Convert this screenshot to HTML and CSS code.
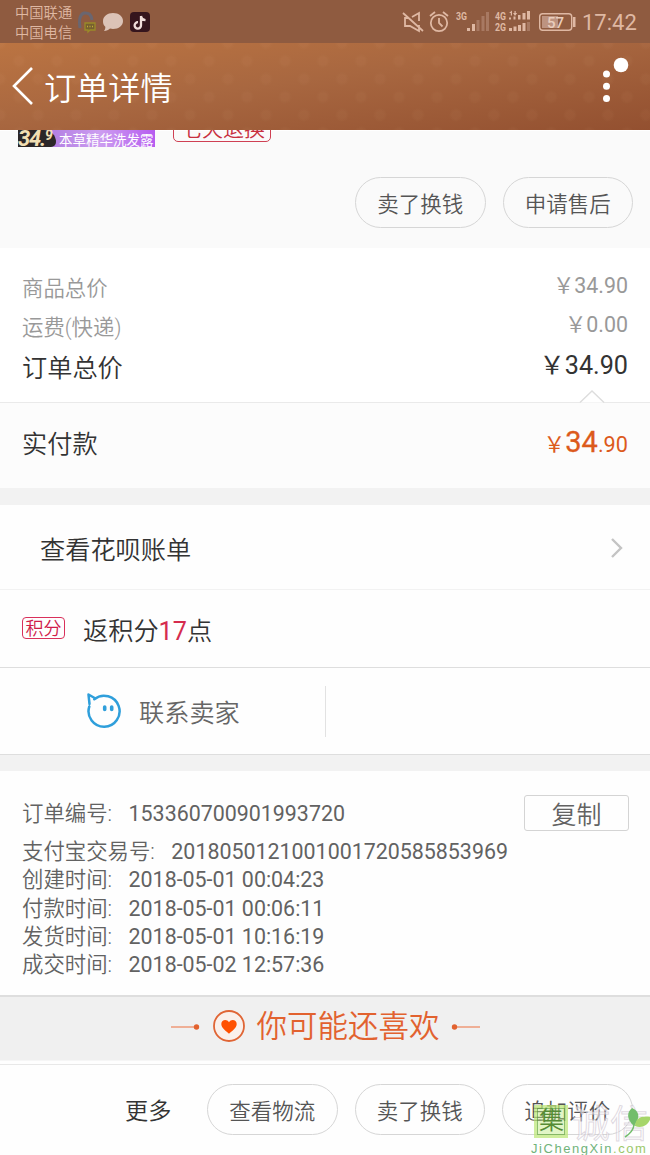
FILE: index.html
```html
<!DOCTYPE html>
<html lang="zh-CN">
<head>
<meta charset="utf-8">
<title>订单详情</title>
<link rel="stylesheet" href="styles.css">
</head>
<body>
<div class="screen">
  <div class="status">
    <div class="carriers"><span>中国联通</span><span>中国电信</span></div>
    <svg class="status-apps" width="78" height="43" viewBox="0 0 78 43">
      <path d="M4 28 Q2 15 8 13 Q15 12 16 20" fill="none" stroke="#6a6670" stroke-width="3"/>
      <path d="M9 23h10v7h-5l-2 2v-2H9z" fill="#77602f" stroke="#9b8a28" stroke-width="1.3"/>
      <path d="M11 26.5h1m1.5 0h1m1.5 0h1" stroke="#c1ab3a" stroke-width="1.5"/>
      <path d="M37 13c5.800 0 10 3.500 10 8s-4.200 8-10 8c-1 0-2-.1-3-.4-1.500 1.400-3.500 2.400-6 2.400 1-1.300 1.500-2.700 1.300-4.200C27.500 25.300 27 23.300 27 21c0-4.500 4.500-8 10-8z" fill="#dcc3b7"/>
      <rect x="54" y="12" width="20" height="20" rx="4" fill="#35151d"/>
      <path d="M65 16v9.300a3.200 3.200 0 1 1-3-3.100M65 16c.3 2.400 2 3.900 4.500 4.100" fill="none" stroke="#f0dedb" stroke-width="2.300"/>
    </svg>
    <span class="grow"></span>
    <svg class="status-icons" width="180" height="43" viewBox="0 0 180 43">
      <g fill="none" stroke="#dfb8a3" stroke-width="1.800">
        <path d="M9 18H5v8h5l9 5v-6M12 17l7-4v8M3 13l20 18"/>
        <circle cx="39" cy="23" r="8.200"/><path d="M39 18v5l3.500 3.500M30 16l5-4M48 16l-5-4"/>
        <rect x="139.700" y="13.700" width="32" height="16.600" rx="3" stroke-width="1.400"/>
      </g>
      <rect x="142" y="16" width="16" height="12" fill="#bd9380"/>
      <path d="M173 17h2.500v10H173z" fill="#dfb8a3"/>
      <g fill="#dfb8a3">
        <path d="M67 28h3v3h-3zM72 24h3v7h-3zM109 28h3v3h-3zM113.500 26.500h3v4.500h-3zM118 25h3v6h-3zM122.500 23h3v8h-3zM109 17.500h2v2h-2zM113.500 16.500h2v3h-2zM118 15h2.500v4.500H118zM122.500 13h3v6.500h-3zM127 11h3v8.500h-3z"/>
        <path d="M109 13l3-2.500v5h-1.200V13zM115 16l-2-3h1.500v-2h1.200v2h1.500z"/>
      </g>
      <path d="M76.500 20h3v11h-3zM81.500 16h3v15h-3zM86 12h3v19h-3zM127 22h3v9h-3z" fill="#a87962"/>
      <g class="tiny"><text x="56" y="20" textLength="11" lengthAdjust="spacingAndGlyphs">3G</text><text x="95" y="20" textLength="11" lengthAdjust="spacingAndGlyphs">4G</text><text x="95" y="31" textLength="11" lengthAdjust="spacingAndGlyphs">2G</text></g>
      <text class="battery" x="147" y="27.500">57</text>
    </svg>
    <span class="clock">17:42</span>
  </div>

  <div class="header">
    <svg class="back" width="24" height="40" viewBox="0 0 24 40"><path d="M21 2 3 20l18 18" fill="none" stroke="#fff" stroke-width="2.600"/></svg>
    <h1 class="title">订单详情</h1>
    <svg class="more" width="40" height="60" viewBox="0 0 40 60"><g fill="#fff"><circle cx="16.500" cy="31" r="3.500"/><circle cx="16.500" cy="43.300" r="3.500"/><circle cx="16.500" cy="55.500" r="3.500"/><circle cx="31" cy="22" r="7.300"/></g></svg>
  </div>

  <div class="product">
    <div class="clip">
      <div class="thumb"><div class="thumb-price">34.<sup>9</sup></div><div class="thumb-name">本草精华洗发露</div></div>
      <div class="tag"><span>七天退换</span></div>
    </div>
    <div class="actions"><span class="pill">卖了换钱</span><span class="pill">申请售后</span></div>
  </div>

  <div class="summary">
    <div class="row"><span>商品总价</span><span class="amount">￥34.90</span></div>
    <div class="row"><span>运费(快递)</span><span class="amount">￥0.00</span></div>
    <div class="row total"><span>订单总价</span><span class="amount">￥34.90</span></div>
  </div>
  <div class="paid">
    <svg class="notch" width="26" height="14" viewBox="0 0 26 14"><path d="M1 13.500 13 2l12 11.500" fill="#fff" stroke="#ddd" stroke-width="1.400"/></svg>
    <span>实付款</span><span class="pay">￥<b>34</b>.90</span>
  </div>
  <div class="gap"></div>

  <div class="bill"><span>查看花呗账单</span><svg width="14" height="22" viewBox="0 0 14 22"><path d="m2 2 9 9-9 9" fill="none" stroke="#c4c4c4" stroke-width="2.400"/></svg></div>
  <div class="points"><span class="badge">积分</span><span>返积分<b>17</b>点</span></div>
  <div class="contact">
    <div class="seller">
      <svg width="36" height="37" viewBox="0 0 36 37"><path d="M3.300 13.500a15.500 15.500 0 1 0 5-7.300M3.500 11 2.500 1.500l7 4" fill="none" stroke="#2f9fdb" stroke-width="2.500" stroke-linejoin="round" stroke-linecap="round"/><path d="M18.700 14v2.500M25.700 14v2.500" stroke="#2f9fdb" stroke-width="3.600" stroke-linecap="round"/></svg>
      <span>联系卖家</span>
    </div>
  </div>
  <div class="gap gap-lined"></div>

  <div class="order">
    <div class="order-no"><div class="field"><span>订单编号:</span><em>153360700901993720</em></div><span class="copy">复制</span></div>
    <div class="field"><span>支付宝交易号:</span><em>2018050121001001720585853969</em></div>
    <div class="field"><span>创建时间:</span><em>2018-05-01 00:04:23</em></div>
    <div class="field"><span>付款时间:</span><em>2018-05-01 00:06:11</em></div>
    <div class="field"><span>发货时间:</span><em>2018-05-01 10:16:19</em></div>
    <div class="field"><span>成交时间:</span><em>2018-05-02 12:57:36</em></div>
  </div>

  <div class="like">
    <svg width="76" height="34" viewBox="0 0 76 34"><path d="M1 17h26" stroke="#ef9a78" stroke-width="1.500"/><circle cx="26.500" cy="17" r="2.700" fill="#e2622f"/><circle cx="59" cy="16" r="15" fill="#faf0eb" stroke="#e06535" stroke-width="1.800"/><path d="M59 23.700c-2.500-2.200-7.700-5.500-7.700-9.700 0-4.300 5.500-5.500 7.700-1.800 2.200-3.700 7.700-2.500 7.700 1.800 0 4.200-5.200 7.500-7.700 9.700z" fill="#ff5000"/></svg>
    <span>你可能还喜欢</span>
    <svg width="30" height="34" viewBox="0 0 30 34"><path d="M3 17h26" stroke="#ef9a78" stroke-width="1.500"/><circle cx="3.500" cy="17" r="2.700" fill="#e2622f"/></svg>
  </div>

  <div class="bottom"><span class="text-action">更多</span><span class="pill">查看物流</span><span class="pill">卖了换钱</span><span class="pill">追加评价</span></div>

  <div class="watermark">
    <div class="mark-top"><span class="seal">集</span><span class="mark-name">诚信</span></div>
    <svg class="leaf" width="30" height="34" viewBox="0 0 30 34"><path d="M10 20C2 13 3 6 8 2c7 3 9 9 2 18z" fill="#72bd6b"/><path d="M11 20c0-8 7-11 16-9-2 7-8 12-16 9z" fill="#a6d66b"/><path d="M10 19Q9 26 1 31" fill="none" stroke="#72bd6b" stroke-width="1.500"/></svg>
    <div class="mark-url">JiChengXin<i>.com</i></div>
  </div>
</div>
</body>
</html>
```
FILE: styles.css
```css
* { box-sizing: border-box; }
body { margin: 0; }
.screen {
  position: relative;
  width: 650px;
  height: 1155px;
  overflow: hidden;
  background: #fefefe;
  font-family: Roboto, "Noto Sans CJK SC", sans-serif;
  font-weight: 400;
  color: #333;
}
.screen span, .screen .title { font-weight: 350; white-space: nowrap; }
.grow { flex: 1; }

.status { display: flex; height: 43px; background: #8f5b40; color: #dfb8a3; }
.carriers { display: flex; flex-direction: column; width: 76px; padding: 4px 0 0 15px; font-size: 14.300px; line-height: 19.500px; }
.tiny { font: 700 10.500px Roboto, sans-serif; fill: #dfb8a3; }
.battery { font: 500 15px Roboto, sans-serif; fill: #e9cdbd; }
.screen .clock { width: 70px; padding-left: 2px; font-size: 22px; font-weight: 400; line-height: 45px; }

.header {
  display: flex;
  height: 87px;
  padding: 23px 20px 0 11px;
  background:
    radial-gradient(circle, rgba(255, 210, 170, .035) 0 4px, transparent 7px) 0 0 / 38px 36px,
    radial-gradient(circle, rgba(255, 210, 170, .035) 0 4px, transparent 7px) 19px 18px / 38px 36px,
    linear-gradient(172deg, #bb7442 0%, #a86740 45%, #935030 100%);
  color: #fff;
}
.title { flex: 1; margin: 0 0 0 9px; font-size: 32.200px; line-height: 46px; }
.header .more { margin: -23px 0 0; }

.product { height: 118px; background: #fafafa; border-top: 1px solid #fff; }
.clip { display: flex; align-items: flex-end; height: 17px; margin-top: -1px; padding-left: 18px; overflow: hidden; }
.thumb { display: flex; width: 137px; height: 17px; background: linear-gradient(90deg, #a16bd9, #cc9df0 60%, #b65cf0); color: #fff; }
.thumb-price { width: 38px; height: 17px; border-radius: 0 12px 5px 0; background: #2b2728; color: #f1dfb3; font: italic 700 22px/16px Roboto, sans-serif; letter-spacing: -1.200px; white-space: nowrap; }
.thumb-price sup { display: inline-block; font-size: 14px; line-height: 10px; vertical-align: 6px; }
.thumb-name { padding-left: 3px; font-size: 13.500px; line-height: 20px; white-space: nowrap; }
.tag { width: 98px; height: 32px; margin: 0 0 5px 18px; padding-left: 7px; border: 1px solid #cf4053; border-radius: 5px; font-size: 21px; line-height: 37px; color: #c8303f; }
.actions { display: flex; justify-content: flex-end; gap: 17px; padding: 30px 17px 0 0; }
.pill { display: block; width: 130.500px; height: 51px; border: 1px solid #d6d6d6; border-radius: 26px; font-size: 21.500px; line-height: 53px; text-align: center; color: #555; }

.summary { height: 154px; padding: 20px 22px 0; background: #fff; }
.row { display: flex; justify-content: space-between; height: 39px; font-size: 21.400px; line-height: 41px; color: #999; }
.screen .row .amount { font-weight: 400; line-height: 36px; }
.total { height: 42px; font-size: 25.200px; line-height: 45px; color: #333; }
.screen .total .amount { line-height: 40px; }

.paid { position: relative; display: flex; justify-content: space-between; height: 86px; padding: 0 22px; border-top: 1px solid #eaeaea; background: #fcfcfc; font-size: 25.200px; line-height: 83px; }
.notch { position: absolute; left: 579px; top: -14px; }
.paid .pay { font-size: 21.700px; font-weight: 400; line-height: 79px; color: #dc5a1c; }
.pay b { font-size: 29px; font-weight: 400; -webkit-text-stroke: .3px #dc5a1c; }
.gap { height: 17px; background: #f2f2f2; }
.gap-lined { border-top: 1px solid #dedede; }

.bill { display: flex; align-items: center; justify-content: space-between; height: 85px; padding: 2px 26px 0 40px; border-bottom: 1px solid #f2f2f2; font-size: 25.200px; }
.bill span { padding-top: 4px; line-height: 83px; }
.points { display: flex; align-items: center; gap: 18px; height: 78px; padding: 6px 0 0 22px; border-bottom: 1px solid #dedede; font-size: 25.200px; line-height: 78px; }
.badge { width: 43px; height: 22px; margin-top: -7px; border: 1px solid #d9305b; border-radius: 4px; color: #d01c4b; font-size: 18px; line-height: 22px; text-align: center; }
.points b { font-weight: 400; font-size: 25.200px; color: #d52b4e; }
.contact { height: 86px; padding-top: 18px; }
.seller { display: flex; align-items: center; gap: 17px; width: 326px; height: 51px; padding-left: 86px; border-right: 1px solid #e2e2e2; font-size: 25.200px; line-height: 51px; color: #666; }
.seller span { padding-top: 3px; }

.order { height: 224px; padding: 24px 21px 0 22px; font-size: 21.400px; color: #626262; }
.order-no { display: flex; justify-content: space-between; height: 43px; line-height: 38px; }
.copy { width: 105px; height: 36px; border: 1px solid #d4d4d4; border-radius: 3px; font-size: 25px; line-height: 39px; text-align: center; }
.field { display: flex; gap: 16.500px; height: 28.300px; line-height: 28.300px; }
.order-no .field { line-height: 38px; }
.field em { font-style: normal; white-space: nowrap; }

.like { display: flex; justify-content: center; gap: 11px; height: 66px; padding: 13px 0 0; border-top: 2px solid #dedede; border-bottom: 1px solid #f6f6f6; background: #f0f0f0; font-size: 30.500px; line-height: 34px; color: #e2622f; }
.bottom { display: flex; align-items: flex-start; gap: 17px; height: 91px; margin-top: 3px; padding: 19px 0 0 125px; border-top: 1px solid #e8e8e8; background: #fefefe; }
.text-action { width: 65px; font-size: 23.200px; line-height: 55px; }

.watermark { position: absolute; left: 530px; top: 1105px; width: 120px; height: 50px; }
.mark-top { display: flex; gap: 4px; height: 36px; padding-left: 4px; }
.seal { width: 34px; height: 33px; border: 3px solid rgba(188, 230, 113, .5); outline: 1px solid rgba(96, 160, 65, .65); outline-offset: -4px; background: rgba(190, 236, 130, .45); font-size: 25px; line-height: 26px; text-align: center; text-indent: 1px; color: #568c36; }
.mark-name { font-size: 38px; line-height: 38px; color: rgba(255, 255, 255, .55); -webkit-text-stroke: 1px rgba(190, 180, 195, .5); }
.leaf { position: absolute; right: -4px; top: 1px; }
.mark-url { position: absolute; left: 1px; top: 36px; font: 13px/15px "Liberation Sans", sans-serif; letter-spacing: 1.550px; color: #70b37a; white-space: nowrap; }
.mark-url i { font-style: normal; color: #9bc86a; }
```
